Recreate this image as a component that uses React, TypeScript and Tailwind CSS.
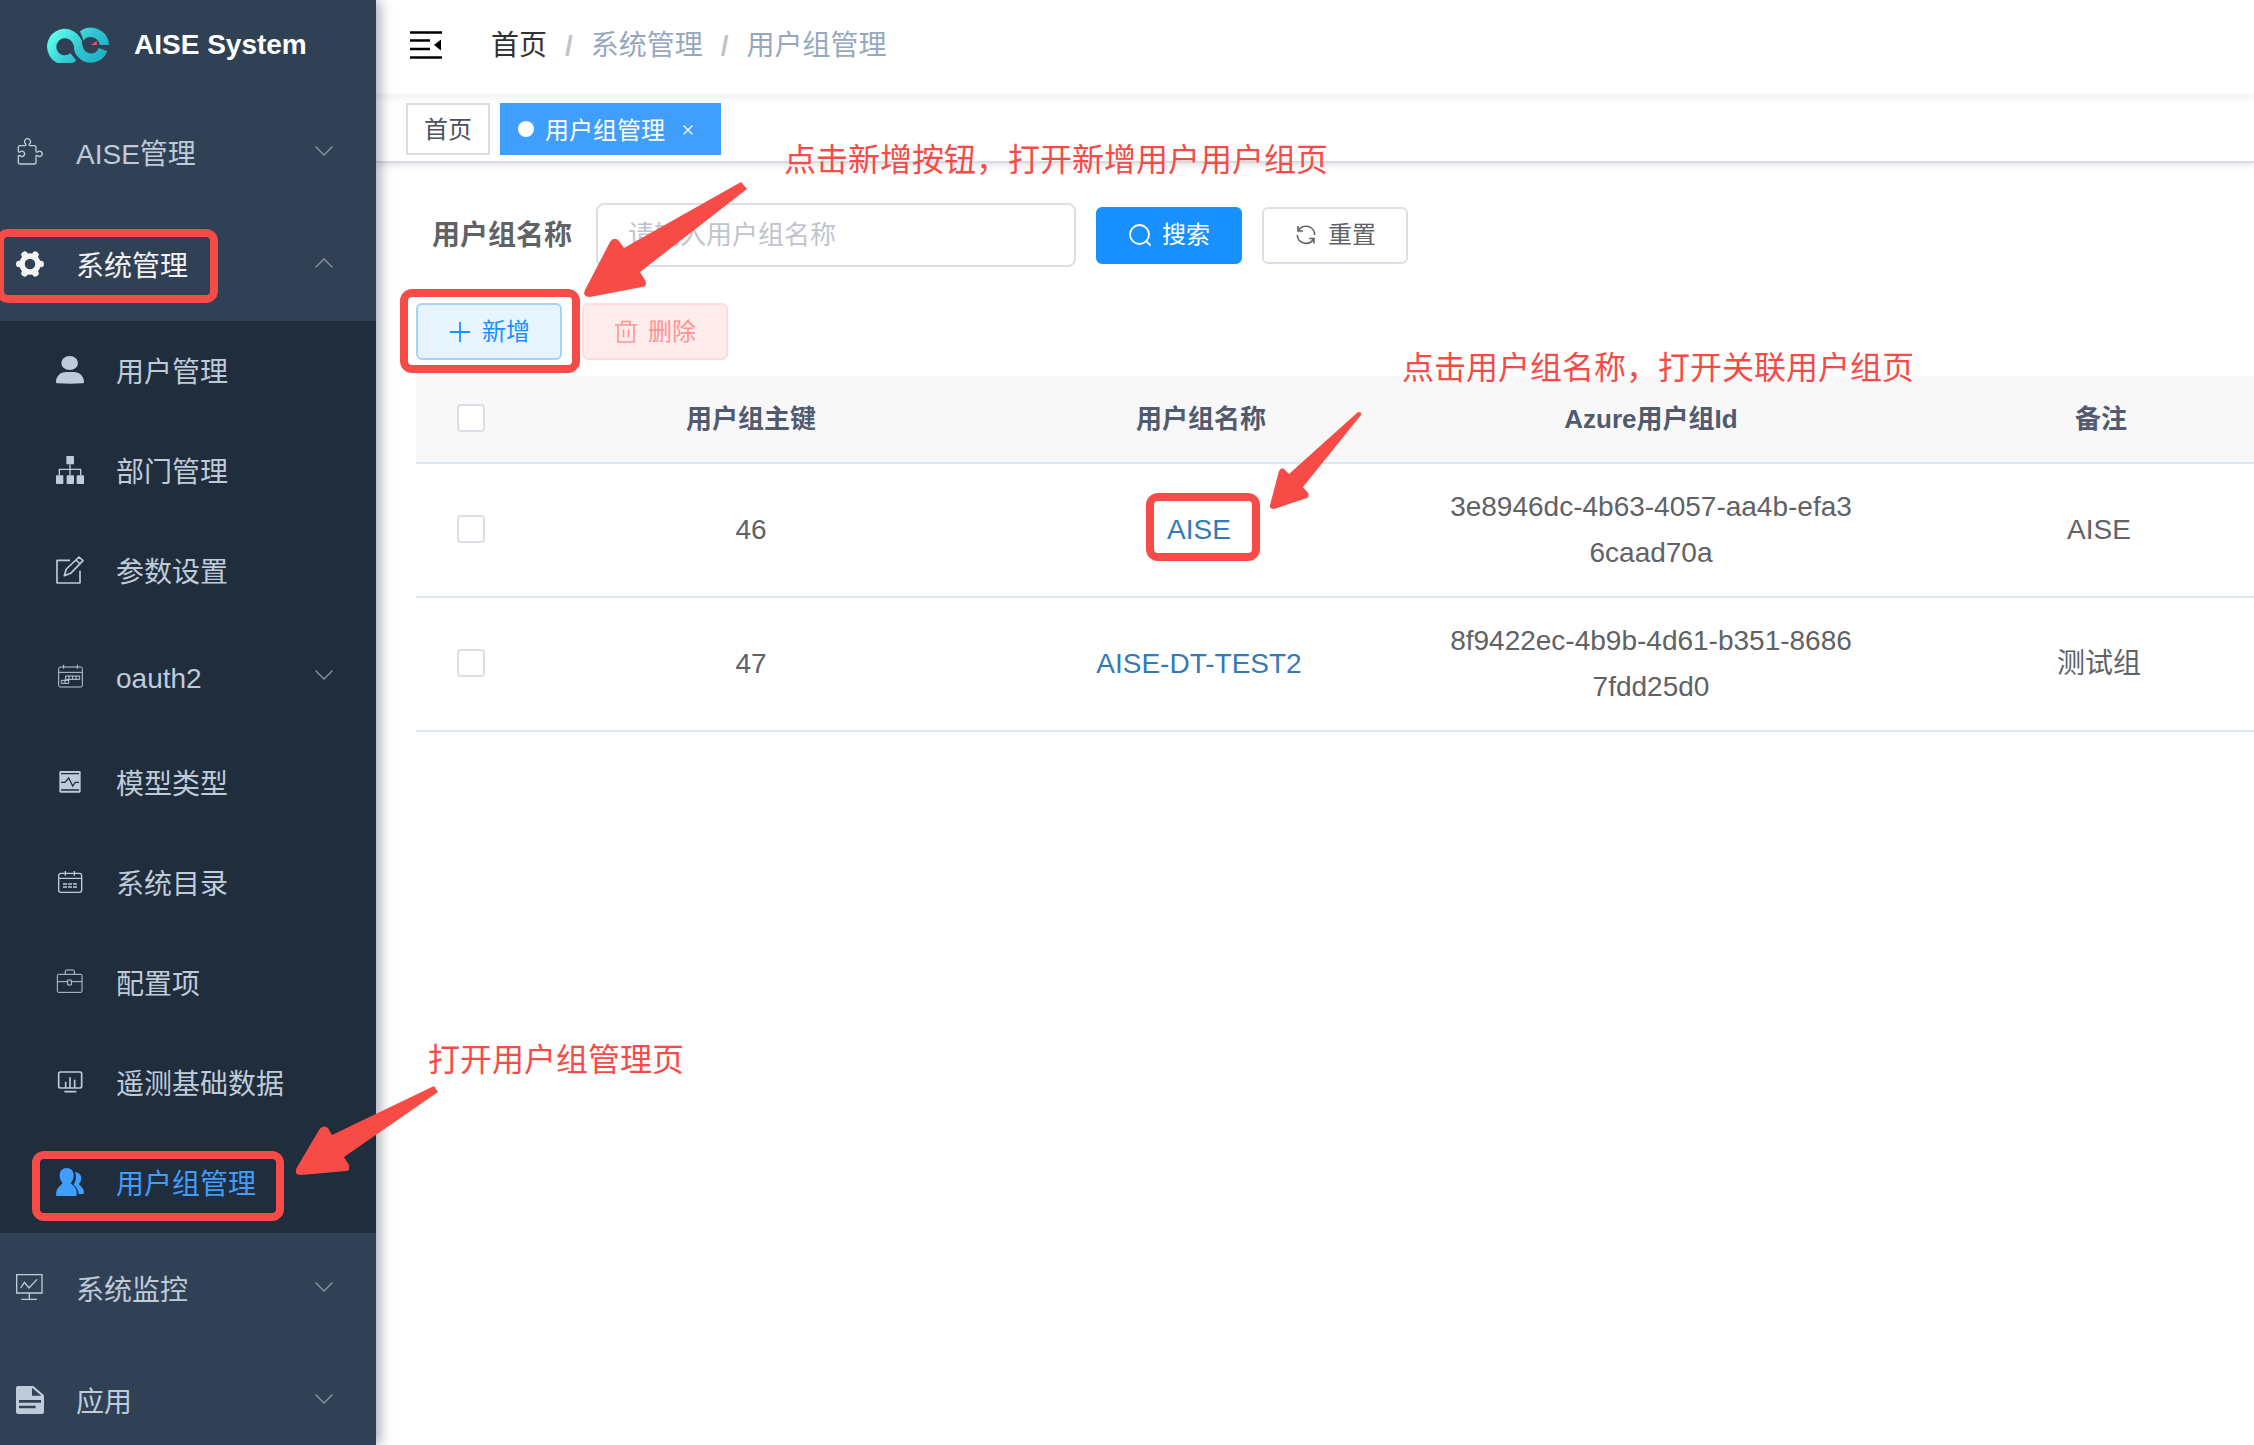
import type { ReactNode } from 'react'

const icons: Record<string, ReactNode> = {
  puzzle: (
    <path
      d="M7 40V29q0-6 6-6h14c3 0 3-3 2-5a9 9 0 1 1 11 0c-1 2-1 5 2 5h12q6 0 6 6v11c0 3 3 3 5 2a8 8 0 1 1 0 11c-2-2-5-1-5 2v17q0 6-6 6H13q-6 0-6-6V55c0-3 3-3 5-2a8 8 0 1 0 0-11c-2 1-5 1-5-2z"
      fill="none"
      stroke="currentColor"
      strokeWidth="4"
    />
  ),
  gear: (
    <g fill="none" stroke="currentColor">
      <circle cx="42" cy="42" r="24" strokeWidth="16" />
      <path
        d="M68 42h6M16 42h-6M55 19.500l3-5M29 19.500l-3-5M55 64.500l3 5M29 64.500l-3 5"
        strokeWidth="20"
        strokeLinecap="round"
      />
    </g>
  ),
  user: (
    <g fill="currentColor">
      <ellipse cx="41" cy="21" rx="25" ry="21" />
      <path d="M0 78C0 60 14 48 30 48h24c16 0 30 12 30 30 0 3-2 4-5 4-24 2-50 2-74 0-3 0-5-1-5-4z" />
    </g>
  ),
  tree: (
    <g fill="currentColor">
      <rect x="31" width="23" height="25" rx="2" />
      <rect y="58" width="22" height="26" rx="2" />
      <rect x="32" y="58" width="22" height="26" rx="2" />
      <rect x="62" y="58" width="22" height="26" rx="2" />
      <path d="M10 58V40h64v18M42 25v33" fill="none" stroke="currentColor" strokeWidth="4" />
    </g>
  ),
  edit: (
    <path
      d="M42 13H3v68h69V44M25 59l6-20L69 3l12 11-37 38zM60 12l12 12"
      fill="none"
      stroke="currentColor"
      strokeWidth="5"
      strokeLinejoin="round"
    />
  ),
  schedule: (
    <g fill="none" stroke="currentColor" strokeWidth="3">
      <rect x="8" y="15" width="71" height="60" rx="5" />
      <path d="M8 31h71M23 8v12M64 8v12M29 42h42v10H29zM16 55h22v9H16zM39 42v13M50 42v10M60 42v10M27 52v12" />
    </g>
  ),
  model: (
    <g>
      <rect x="10" y="9" width="64" height="65" rx="4" fill="currentColor" />
      <path
        d="M15 17h54M15 66h54M15 43h12l11-13 12 24 8-11h11"
        fill="none"
        stroke="#1f2d3d"
        strokeWidth="4"
      />
    </g>
  ),
  calendar: (
    <g fill="none" stroke="currentColor" strokeWidth="4">
      <rect x="8" y="16" width="69" height="57" rx="7" />
      <path d="M8 31h69M28 9v14M55 9v14M21 48h12M36 48h12M51 48h12M21 57h12M36 57h12M51 57h12" />
    </g>
  ),
  briefcase: (
    <g fill="none" stroke="currentColor" strokeWidth="3">
      <rect x="4" y="19" width="74" height="54" rx="3" />
      <path d="M4 41h31M46 41h32M28 19V9q0-3 3-3h21q3 0 3 3v10M35 36h11v15H35z" />
    </g>
  ),
  dashboard: (
    <g fill="none" stroke="currentColor" strokeWidth="5">
      <rect x="8" y="12" width="69" height="48" rx="5" />
      <path d="M29 41v19M42 28v32M56 35v25M25 71h36" />
    </g>
  ),
  peoples: (
    <g fill="currentColor">
      <path d="M32 0c13 0 21 9 21 22 0 10-4 18-9 23 3 6 17 10 18 27v8q0 4-4 4H4q-4 0-4-4C0 58 17 52 20 45c-6-5-9-13-9-23C11 9 19 0 32 0z" />
      <path d="M57 13c12 0 19 8 19 18 0 8-3 13-7 17 2 6 14 9 15 25 0 5-3 6-16 5-1-15-9-22-15-28 8-12 9-25 4-37z" />
    </g>
  ),
  monitor: (
    <path
      d="M2 2h76v55H2zM14 42l11-17 14 17 24-26M40 57v19M16 76h47"
      fill="none"
      stroke="currentColor"
      strokeWidth="4"
    />
  ),
  doc: (
    <g>
      <path d="M6 0h46l32 28v50q0 6-6 6H6q-6 0-6-6V6q0-6 6-6z" fill="currentColor" />
      <path d="M48 5v24h28z" fill="#304156" />
      <path d="M9 46h66M9 63h50" stroke="#304156" strokeWidth="8" />
    </g>
  ),
}

function Icon({ name }: { name: string }) {
  return (
    <svg viewBox="0 0 84 84" className="mb-0.5 size-7 shrink-0 overflow-visible">
      {icons[name]}
    </svg>
  )
}

function Chevron({ up = false }: { up?: boolean }) {
  return (
    <svg viewBox="0 0 18 10" className="mb-1 ml-auto h-[10px] w-[18px] shrink-0">
      <path
        d={up ? 'M.5 9.500 9 1l8.500 8.500' : 'M.5.5 9 9 17.500.5'}
        fill="none"
        stroke="#909399"
        strokeWidth="1.300"
      />
    </svg>
  )
}

function Logo() {
  return (
    <svg viewBox="0 0 188 108" className="h-9 w-[62px]">
      <defs>
        <linearGradient id="logo-fill" x1="30" y1="0" x2="150" y2="108" gradientUnits="userSpaceOnUse">
          <stop offset="0" stopColor="#60ffee" />
          <stop offset="0.600" stopColor="#2fc4cf" />
          <stop offset="1" stopColor="#1fb2c7" />
        </linearGradient>
      </defs>
      <path d="M160 54h28A55 54 0 0 0 98 14l13 26a28 28 0 0 1 49 14z" fill="url(#logo-fill)" />
      <path
        d="M80 90A40 40 0 1 1 94 54A39 40 0 0 0 133 94A40 40 0 0 0 170 68"
        fill="none"
        stroke="url(#logo-fill)"
        strokeWidth="28"
      />
      <path d="M108 54q0-32-13-44M80 54q0 32 14 48" fill="none" stroke="#304156" strokeWidth="3" />
      <path d="M132 54l19-12v12z" fill="#f2545b" />
    </svg>
  )
}

const subMenu = [
  { icon: 'user', label: '用户管理' },
  { icon: 'tree', label: '部门管理' },
  { icon: 'edit', label: '参数设置' },
  { icon: 'schedule', label: 'oauth2', group: true },
  { icon: 'model', label: '模型类型' },
  { icon: 'calendar', label: '系统目录' },
  { icon: 'briefcase', label: '配置项' },
  { icon: 'dashboard', label: '遥测基础数据' },
  { icon: 'peoples', label: '用户组管理', active: true },
]

function MenuGroup({ icon, label, open = false }: { icon: string; label: string; open?: boolean }) {
  return (
    <button
      type="button"
      aria-expanded={open}
      className={`flex h-28 w-full items-center gap-8 pr-[43px] pl-4 ${open ? 'text-[#f4f4f5]' : ''}`}
    >
      <Icon name={icon} />
      <span className="pt-1">{label}</span>
      <Chevron up={open} />
    </button>
  )
}

function Sidebar() {
  return (
    <aside className="relative z-10 w-[376px] shrink-0 bg-[#304156] text-[28px] leading-10 text-[#bfcbd9] shadow-[4px_0_12px_rgba(0,21,41,0.35)]">
      <a href="#" className="flex h-[97px] items-center gap-[25px] pb-[7px] pl-[47px] font-bold text-white">
        <Logo />
        <h1>AISE System</h1>
      </a>
      <nav>
        <MenuGroup icon="puzzle" label="AISE管理" />
        <MenuGroup icon="gear" label="系统管理" open />
        <ul className="bg-[#1f2d3d]">
          {subMenu.map((item) => (
            <li key={item.label}>
              {item.group ? (
                <button type="button" className="flex h-28 w-full items-center gap-8 pr-[43px] pl-14">
                  <Icon name={item.icon} />
                  <span className="pt-1">{item.label}</span>
                  <Chevron />
                </button>
              ) : (
                <a
                  href="#"
                  className={`flex h-[100px] items-center gap-8 pl-14 ${item.active ? 'text-[#409eff]' : ''}`}
                >
                  <Icon name={item.icon} />
                  <span className="pt-1">{item.label}</span>
                </a>
              )}
            </li>
          ))}
        </ul>
        <MenuGroup icon="monitor" label="系统监控" />
        <MenuGroup icon="doc" label="应用" />
      </nav>
    </aside>
  )
}

function Navbar() {
  return (
    <header className="flex h-[95px] items-center pb-[5px] pl-[34px] shadow-[0_2px_8px_rgba(0,21,41,0.08)]">
      <button type="button" aria-label="收起菜单" className="mr-[49px]">
        <svg viewBox="0 0 32 28" className="h-7 w-8">
          <path d="M0 1.500h32M0 9.500h20M0 18h20M0 26.500h32" stroke="#000" strokeWidth="2.600" />
          <path d="M31 8.500v11L24 14z" />
        </svg>
      </button>
      <nav className="flex items-center gap-[18px] pt-0.5 text-[28px] leading-10 text-[#97a8be]">
        <a href="#" className="text-[#303133]">首页</a>
        <span className="font-bold text-[#c0c4cc]">/</span>
        <span>系统管理</span>
        <span className="font-bold text-[#c0c4cc]">/</span>
        <span>用户组管理</span>
      </nav>
    </header>
  )
}

function TagsView() {
  return (
    <div className="flex h-[68px] gap-[10px] border-b-2 border-[#d8dce5] pt-2 pl-[30px] text-2xl shadow-[0_2px_6px_rgba(0,0,0,0.12)]">
      <a href="#" className="flex h-[52px] items-center border-2 border-[#d8dce5] px-4 pt-0.5 text-[#495060]">
        首页
      </a>
      <div className="flex h-[52px] items-center gap-[11px] bg-[#409eff] pr-[22px] pl-[18px] text-white">
        <span className="size-4 rounded-full bg-white" />
        <a href="#" className="pt-1">用户组管理</a>
        <button type="button" aria-label="关闭" className="flex h-6 w-[23px] items-center justify-center pt-0.5">
          <svg viewBox="0 0 10 10" className="size-[10px]">
            <path d="M.5.5l9 9M9.500.5l-9 9" stroke="#fff" strokeWidth="1.200" />
          </svg>
        </button>
      </div>
    </div>
  )
}

const button = 'flex h-[57px] items-center gap-[10px] rounded-md border-2 px-[30px] text-2xl'

function SearchForm() {
  return (
    <form className="flex items-center gap-5">
      <label htmlFor="group-name" className="pt-0.5 pr-1 pl-4 text-[28px] leading-10 font-bold text-[#606266]">
        用户组名称
      </label>
      <input
        id="group-name"
        type="text"
        placeholder="请输入用户组名称"
        className="h-16 w-[480px] rounded-lg border-2 border-[#dcdfe6] px-[30px] text-[26px] text-[#606266] placeholder:text-[#c0c4cc]"
      />
      <button type="button" className={`${button} border-[#1890ff] bg-[#1890ff] text-white`}>
        <svg viewBox="0 0 24 24" className="size-6" fill="none" stroke="currentColor" strokeWidth="1.800">
          <circle cx="11.500" cy="11.500" r="9.500" />
          <path d="M18.500 18.500l4 4" />
        </svg>
        搜索
      </button>
      <button type="button" className={`${button} border-[#dcdfe6] bg-white text-[#606266]`}>
        <svg viewBox="0 0 24 24" className="size-6" fill="none" stroke="currentColor" strokeWidth="1.600">
          <path d="M4.500 7.500A8.700 8.700 0 0 1 20.700 12M19.500 16A8.700 8.700 0 0 1 3.300 12" />
          <path d="M4 3v5h5M20 20.500v-5h-5" />
        </svg>
        重置
      </button>
    </form>
  )
}

const rows = [
  { id: 46, name: 'AISE', azureId: '3e8946dc-4b63-4057-aa4b-efa36caad70a', remark: 'AISE' },
  { id: 47, name: 'AISE-DT-TEST2', azureId: '8f9422ec-4b9b-4d61-b351-86867fdd25d0', remark: '测试组' },
]

const checkbox = 'mx-auto mb-0.5 block size-7 appearance-none rounded border-2 border-[#dcdfe6] bg-white'

function GroupTable() {
  return (
    <div className="overflow-hidden">
      <table className="w-[1910px] table-fixed border-separate border-spacing-0 text-center text-[28px] leading-[46px] text-[#606266]">
        <colgroup>
          <col className="w-[110px]" />
          <col />
          <col />
          <col />
          <col />
        </colgroup>
        <thead className="bg-[#f8f8f9] text-[26px] text-[#515a6e]">
          <tr className="h-[88px] *:border-b-2 *:border-[#dfe6ec]">
            <th>
              <input type="checkbox" aria-label="全选" className={checkbox} />
            </th>
            <th>用户组主键</th>
            <th>用户组名称</th>
            <th>Azure用户组Id</th>
            <th>备注</th>
          </tr>
        </thead>
        <tbody>
          {rows.map((row) => (
            <tr key={row.id} className="h-[134px] *:border-b-2 *:border-[#dfe6ec]">
              <td>
                <input type="checkbox" aria-label={`选择 ${row.name}`} className={checkbox} />
              </td>
              <td>{row.id}</td>
              <td className="pr-1">
                <a href="#" className="text-[#337ab7]">{row.name}</a>
              </td>
              <td className="px-5 break-all">{row.azureId}</td>
              <td className="pr-1">{row.remark}</td>
            </tr>
          ))}
        </tbody>
      </table>
    </div>
  )
}

// red boxes, arrows and hints laid over the page
function Annotations() {
  const box = 'absolute rounded-xl border-8 border-[#f64b46]'
  const note = 'absolute text-[32px] leading-10 whitespace-nowrap'
  return (
    <div className="pointer-events-none absolute inset-0 z-20 overflow-hidden text-[#f64b46]">
      <div className={`${box} top-[229px] -left-1 h-[74px] w-[222px]`} />
      <div className={`${box} top-[1151px] left-8 h-[70px] w-[252px]`} />
      <div className={`${box} top-[289px] left-[400px] h-[84px] w-[180px]`} />
      <div className={`${box} top-[493px] left-[1146px] h-[68px] w-[114px]`} />

      <p className={`${note} top-[140px] left-[784px]`}>点击新增按钮，打开新增用户用户组页</p>
      <p className={`${note} top-[348px] left-[1402px]`}>点击用户组名称，打开关联用户组页</p>
      <p className={`${note} top-[1040px] left-[428px]`}>打开用户组管理页</p>

      <svg viewBox="0 0 164 116" className="absolute top-[182px] left-[584px] h-[116px] w-[164px]" fill="currentColor">
        <path d="M157 0l6 7L56 90l5 8q3 6-3 7L6 115q-8 0-5-7L26 60q4-6 9-1l5 7z" />
      </svg>
      <svg viewBox="0 0 92 98" className="absolute top-[412px] left-[1270px] h-[98px] w-[92px]" fill="currentColor">
        <path d="M88 0q4 0 3 3L33 75l5 6q2 3-1 5L4 97q-5 0-4-4L9 59q3-5 6-1l4 4z" />
      </svg>
      <svg viewBox="0 0 142 90" className="absolute top-[1086px] left-[296px] h-[90px] w-[142px]" fill="currentColor">
        <path d="M138 0l4 6L48 71l5 8q1 6-3 6L5 89q-7 0-5-6L23 44q4-6 9-2l4 7z" />
      </svg>
    </div>
  )
}

export default function App() {
  return (
    <div className="relative flex h-screen overflow-hidden bg-white font-['Liberation_Sans','Noto_Sans_CJK_SC',sans-serif]">
      <Sidebar />
      <main className="min-w-0 flex-1">
        <Navbar />
        <TagsView />
        <section className="pt-10 pl-10">
          <SearchForm />
          <div className="mt-9 mb-4 flex gap-5">
            <button type="button" className={`${button} border-[#a3d3ff] bg-[#e8f4ff] text-[#1890ff]`}>
              <svg viewBox="0 0 24 24" className="size-6" stroke="currentColor" strokeWidth="1.800">
                <path d="M2 12h20M12 2v20" />
              </svg>
              新增
            </button>
            <button type="button" disabled className={`${button} border-[#ffdbdb] bg-[#ffeded] text-[#ff9292]`}>
              <svg viewBox="0 0 24 24" className="size-6" fill="none" stroke="currentColor" strokeWidth="1.600">
                <path d="M1 5h22M4 5v17h16V5M8 5V1.500h8V5M9.500 9.500v8M14.500 9.500v8" />
              </svg>
              删除
            </button>
          </div>
          <GroupTable />
        </section>
      </main>
      <Annotations />
    </div>
  )
}
